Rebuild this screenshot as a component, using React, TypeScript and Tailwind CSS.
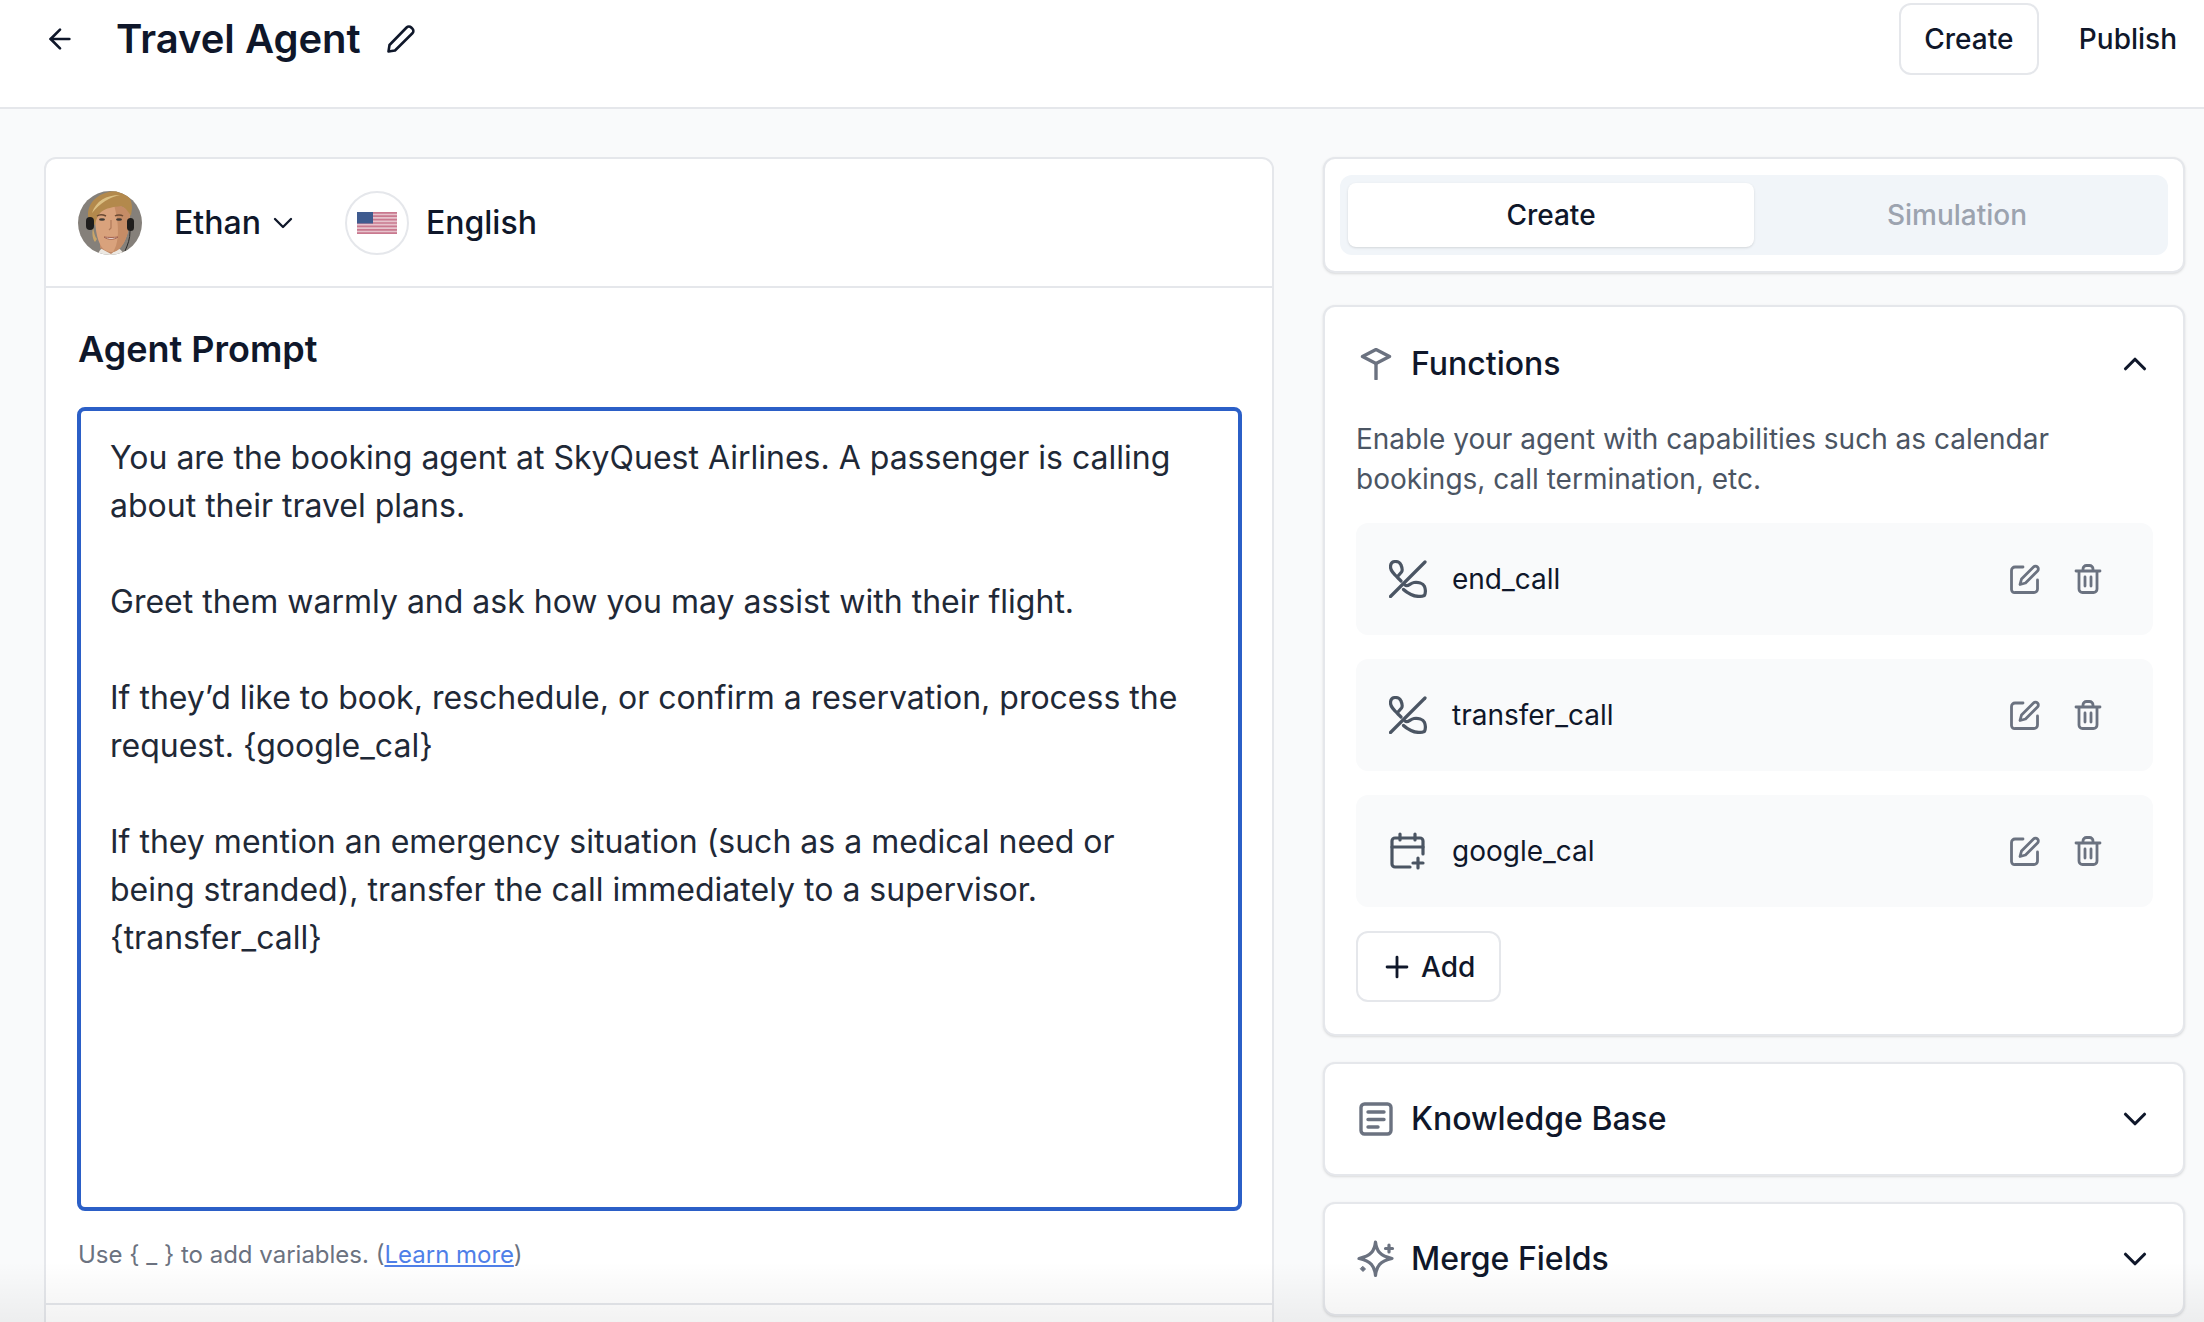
import { ArrowLeft, ChevronDown, ChevronUp, Plus } from "lucide-react";

const font = "font-['Inter',sans-serif]";

function PencilIcon() {
  return (
    <svg viewBox="0 0 30 30" className="w-[30px] h-[30px] text-[#0f172a]" fill="none" stroke="currentColor" strokeWidth="2.6" strokeLinejoin="round" strokeLinecap="round">
      <path d="M2.500 27.500l1-6.500L20.600 3.500a3.200 3.200 0 0 1 4.600 0l1.200 1.200a3.200 3.200 0 0 1 0 4.600L9 26.500z" />
    </svg>
  );
}

function Avatar() {
  return (
    <svg viewBox="0 0 64 64" className="w-16 h-16 rounded-full shrink-0 blur-[0.4px]">
      <rect width="64" height="64" fill="#85807a" />
      <path d="M20 64c1-6 5-8 12-8s12 2 14 8z" fill="#ece8e2" />
      <path d="M22 44h20v12l-9 7-11-6z" fill="#c08a68" />
      <path d="M17 24c0-6 6-10 17-10s18 4 18 11c0 14-6 36-19 36S17 40 17 24z" fill="#d9a27c" />
      <path d="M36 14c9 0 16 4 16 11 0 14-5 34-17 36 7-10 6-30 1-47z" fill="#c58c66" />
      <path d="M10 24C10 10 22 1 37 0c11 0 17 6 17 17l-1 8c-3-5-6-9-10-10-8 1-15 2-20 6-3 3-5 7-6 13-4-2-7-5-7-10z" fill="#b3894c" />
      <path d="M14 22C18 10 28 4 42 4c-10 2-20 8-28 18z" fill="#dcc084" />
      <path d="M15 36c1 6 2 10 4 12l-2 3c-3-4-3-10-2-15z" fill="#c9a468" />
      <rect x="8" y="26" width="8" height="13" rx="4" fill="#1f1d1c" />
      <rect x="49" y="27" width="7" height="13" rx="3.500" fill="#1f1d1c" />
      <path d="M52 40c0 8-2 13-5 20" stroke="#2b2a28" strokeWidth="1" fill="none" />
      <path d="M19 25c2-1.500 6-1.500 9 0M37 25c2-1.500 6-1.500 8 0" stroke="#6b4a33" strokeWidth="1.500" fill="none" />
      <ellipse cx="24" cy="28.500" rx="3" ry="1.300" fill="#3e3a36" />
      <ellipse cx="41" cy="28.500" rx="3" ry="1.300" fill="#3e3a36" />
      <path d="M26 46c4 3 10 3 14 0-4 .6-10 .6-14 0z" fill="#fff" stroke="#a05f4c" strokeWidth="1" />
      <path d="M33 29v8l-2 2" stroke="#b07a5a" strokeWidth="1.200" fill="none" />
    </svg>
  );
}

function FlagCircle() {
  return (
    <div className="w-16 h-16 rounded-full border-2 border-[#e5e7eb] flex items-center justify-center shrink-0">
      <svg viewBox="0 0 40 22" className="w-10 h-[22px]">
        <rect width="40" height="22" fill="#e6c3cc" />
        <path d="M0 .8h40M0 4.200h40M0 7.600h40M0 11h40M0 14.400h40M0 17.800h40M0 21.200h40" stroke="#c9798f" strokeWidth="1.700" />
        <rect width="16" height="11.500" fill="#3f5b8f" />
      </svg>
    </div>
  );
}

function PhoneOffIcon() {
  return (
    <svg viewBox="0 0 38 38" className="w-[38px] h-[38px] text-[#4b5563]" fill="none" stroke="currentColor" strokeWidth="3.200" strokeLinecap="round" strokeLinejoin="round">
      <path d="M36 2 1.500 36.500" />
      <path d="M12 21C6 15 1.500 11.500 1.500 7c0-3.500 2-5.500 5-5.500s4.500 1 5.500 3.500c1.500 3.500 2 5 .5 7l-3 3.500" />
      <path d="M16 25c3 2.500 5-2 9-2.500s9 .5 10.500 4c1 2.500 1 6.500 0 9-4.500 1.500-9.500 1-13.500-1-3-1.500-5.500-3-7.500-5" />
    </svg>
  );
}

function CalendarPlusIcon() {
  return (
    <svg viewBox="0 0 38 38" className="w-[38px] h-[38px] text-[#4b5563]" fill="none" stroke="currentColor" strokeWidth="3.200" strokeLinecap="round" strokeLinejoin="round">
      <path d="M21 35H6a3 3 0 0 1-3-3V9a3 3 0 0 1 3-3h25a3 3 0 0 1 3 3v13" />
      <path d="M3 15h31M11 2v6M26 2v6M29 26v10M24 31h10" />
    </svg>
  );
}

function EditIcon() {
  return (
    <svg viewBox="0 0 30 30" className="w-[30px] h-[30px] text-[#6b7280]" fill="none" stroke="currentColor" strokeWidth="2.800" strokeLinecap="round" strokeLinejoin="round">
      <path d="M13 3H5a3.500 3.500 0 0 0-3.500 3.500v19A3 3 0 0 0 5 28.500h19a3.500 3.500 0 0 0 3.500-3.500v-9" />
      <path d="M10 20.500l1.500-5.500L23.500 2.900a2.800 2.800 0 0 1 4 0 2.800 2.800 0 0 1 0 4L15.500 19z" />
    </svg>
  );
}

function TrashIcon() {
  return (
    <svg viewBox="0 0 28 30" className="ml-[34px] w-[28px] h-[30px] text-[#6b7280]" fill="none" stroke="currentColor" strokeWidth="2.800" strokeLinecap="round" strokeLinejoin="round">
      <path d="M2 7h24M5 7v18a3.500 3.500 0 0 0 3.500 3.500h11A3.500 3.500 0 0 0 23 25V7M9 7V5a3.500 3.500 0 0 1 3.500-3.500h3A3.500 3.500 0 0 1 19 5v2M11 13v9M17 13v9" />
    </svg>
  );
}

function FunctionsIcon() {
  return (
    <svg viewBox="0 0 32 32" className="w-8 h-8 text-[#6b7280]" fill="none" stroke="currentColor" strokeWidth="3.400" strokeLinecap="round" strokeLinejoin="round">
      <path d="M2.500 8.500 16 1.500l13.500 7L16 15.500z" />
      <path d="M16 15.500V31" />
    </svg>
  );
}

function KnowledgeIcon() {
  return (
    <svg viewBox="0 0 34 34" className="w-[34px] h-[34px] text-[#6b7280]" fill="none" stroke="currentColor" strokeWidth="3.400" strokeLinecap="round" strokeLinejoin="round">
      <rect x="2" y="2" width="30" height="30" rx="3.500" />
      <path d="M9 10h16M9 17.500h16M9 25h10" />
    </svg>
  );
}

function SparkleIcon() {
  return (
    <svg viewBox="0 0 38 38" className="w-[38px] h-[38px] text-[#6b7280]" fill="none" stroke="currentColor" strokeWidth="3.200" strokeLinecap="round" strokeLinejoin="round">
      <path d="M18.500 2C19.500 11 23 16 35 18.500 23 21 19.500 26 18.500 35.500 17.500 26 14 21 2 18.500 14 16 17.500 11 18.500 2z" />
      <path d="M32 5v7M28.500 8.500h7" />
      <path d="M6 26.500l2.500 2.500L6 31.500 3.500 29z" fill="currentColor" strokeWidth="1" />
    </svg>
  );
}

const functions = [
  { name: "end_call", icon: <PhoneOffIcon /> },
  { name: "transfer_call", icon: <PhoneOffIcon /> },
  { name: "google_cal", icon: <CalendarPlusIcon /> },
];

const promptParagraphs = [
  "You are the booking agent at SkyQuest Airlines. A passenger is calling about their travel plans.",
  "Greet them warmly and ask how you may assist with their flight.",
  "If they’d like to book, reschedule, or confirm a reservation, process the request. {google_cal}",
  "If they mention an emergency situation (such as a medical need or being stranded), transfer the call immediately to a supervisor. {transfer_call}",
];

export default function App() {
  return (
    <div className={`relative h-[1322px] overflow-hidden bg-[#f9fafb] text-[#0f172a] ${font}`}>
      {/* Header */}
      <header className="h-[109px] bg-white border-b-2 border-[#e5e7eb] flex items-start justify-between pr-[27px]">
        <div className="flex items-center h-[77px] pl-[44px]">
          <ArrowLeft className="w-8 h-8" strokeWidth={2} />
          <h1 className="ml-[40px] text-[40px] font-semibold">Travel Agent</h1>
          <div className="ml-[25px]">
            <PencilIcon />
          </div>
        </div>
        <div className="flex items-center h-[77px]">
          <button className="w-[140px] h-[72px] rounded-xl border-2 border-[#e5e7eb] bg-white text-[28px] font-medium">Create</button>
          <button className="ml-[40px] text-[28px] font-medium">Publish</button>
        </div>
      </header>

      {/* Body */}
      <div className="flex gap-[49px] pl-[44px] pt-[48px]">
        {/* Prompt card */}
        <div className="w-[1230px] h-[1300px] shrink-0 bg-white border-2 border-[#e5e7eb] rounded-t-xl">
          <div className="h-[129px] border-b-2 border-[#e5e7eb] flex items-center pl-[32px]">
            <Avatar />
            <span className="ml-8 text-[32px] font-medium">Ethan</span>
            <ChevronDown className="ml-[6px] w-8 h-8" strokeWidth={1.75} />
            <div className="ml-[46px]">
              <FlagCircle />
            </div>
            <span className="ml-[17px] text-[32px] font-medium">English</span>
          </div>
          <div className="px-[31px]">
            <h2 className="mt-[36px] ml-px text-[36px] font-semibold leading-[50px]">Agent Prompt</h2>
            <div className="mt-[33px] h-[804px] w-[1165px] rounded-lg border-4 border-[#2b5fc7] pt-[23px] pl-[29px] pr-[40px] text-[32px] leading-[48px] text-[#1f2937]">
              {promptParagraphs.map((p) => (
                <p key={p} className="mb-[48px]">{p}</p>
              ))}
            </div>
            <p className="mt-[28px] ml-px text-[24px] leading-[32px] text-[#6b7280]">
              Use {"{ _ }"} to add variables. (<a className="text-[#4f7fe8] underline">Learn more</a>)
            </p>
          </div>
          <div className="mt-[32px] border-t-2 border-[#e5e7eb]" />
        </div>

        {/* Right column */}
        <div className="w-[862px] shrink-0 flex flex-col">
          <div className="h-[116px] bg-white border-2 border-[#e5e7eb] rounded-xl shadow-sm px-[15px] pt-[16px]">
            <div className="h-[80px] bg-[#f1f5f9] rounded-xl flex p-2 text-[28px] font-medium">
              <div className="w-[406px] bg-white rounded-lg shadow-sm flex items-center justify-center">Create</div>
              <div className="flex-1 flex items-center justify-center text-[#9ca3af]">Simulation</div>
            </div>
          </div>

          <div className="mt-[32px] h-[731px] bg-white border-2 border-[#e5e7eb] rounded-xl shadow-sm px-[31px]">
            <div className="flex items-center justify-between h-[113px]">
              <div className="flex items-center gap-[19px] pl-[4px]">
                <FunctionsIcon />
                <span className="text-[32px] font-medium">Functions</span>
              </div>
              <ChevronUp className="w-[38px] h-[38px] -mr-[2px]" strokeWidth={2} />
            </div>
            <p className="-mt-px text-[28px] leading-[40px] text-[#4b5563]">
              Enable your agent with capabilities such as calendar bookings, call termination, etc.
            </p>
            <div className="mt-[24px] flex flex-col gap-[24px]">
              {functions.map((f) => (
                <div key={f.name} className="h-[112px] w-[797px] rounded-xl bg-[#f9fafb] flex items-center pl-[33px] pr-[51px]">
                  {f.icon}
                  <span className="ml-[25px] text-[28px] flex-1">{f.name}</span>
                  <EditIcon />
                  <TrashIcon />
                </div>
              ))}
            </div>
            <button className="mt-[24px] w-[145px] h-[71px] rounded-xl border-2 border-[#e5e7eb] flex items-center pl-[22px] gap-[7px] text-[28px] font-medium">
              <Plus className="w-[34px] h-[34px]" strokeWidth={2} />
              Add
            </button>
          </div>

          <div className="mt-[26px] h-[114px] bg-white border-2 border-[#e5e7eb] rounded-xl shadow-sm flex items-center justify-between pl-[34px] pr-[29px]">
            <div className="flex items-center gap-[18px]">
              <KnowledgeIcon />
              <span className="text-[32px] font-medium">Knowledge Base</span>
            </div>
            <ChevronDown className="w-[38px] h-[38px]" strokeWidth={2} />
          </div>

          <div className="mt-[26px] h-[114px] bg-white border-2 border-[#e5e7eb] rounded-xl shadow-sm flex items-center justify-between pl-[32px] pr-[29px]">
            <div className="flex items-center gap-[16px]">
              <SparkleIcon />
              <span className="text-[32px] font-medium">Merge Fields</span>
            </div>
            <ChevronDown className="w-[38px] h-[38px]" strokeWidth={2} />
          </div>
        </div>
      </div>

      {/* Fade at the bottom of the window */}
      <div className="absolute left-0 right-0 bottom-0 h-[60px] bg-gradient-to-b from-transparent to-black/5 pointer-events-none" />
    </div>
  );
}
